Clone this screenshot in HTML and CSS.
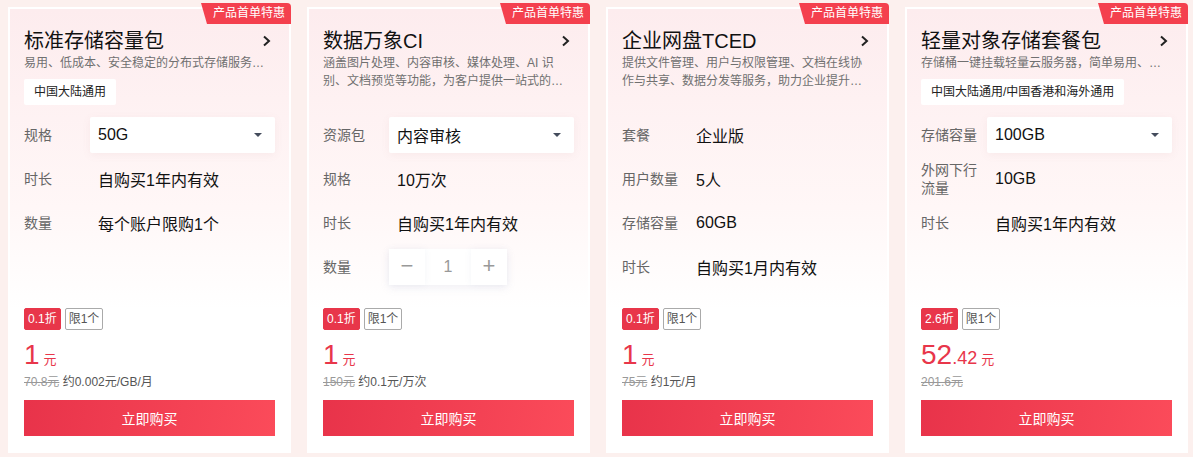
FILE: index.html
```html
<!DOCTYPE html>
<html>
<head>
    <meta charset="utf-8">
    <title>产品首单特惠</title>
    <link rel="stylesheet" href="styles.css">
</head>
<body>
    <div class="cards">
        <!-- 标准存储容量包 -->
        <div class="card">
            <span class="badge">产品首单特惠</span>
            <div class="card-head">
                <div class="title-row">
                    <span class="title">标准存储容量包</span>
                    <svg class="chevron" width="10" height="12" viewBox="0 0 10 12"><path d="M2 1.5L7 6L2 10.5" fill="none" stroke="#222" stroke-width="2"/></svg>
                </div>
                <p class="desc one-line">易用、低成本、安全稳定的分布式存储服务，适用于海量非结构化数据存储</p>
                <span class="region">中国大陆通用</span>
            </div>
            <div class="spec">
                <span class="label">规格</span>
                <div class="select">50G<i class="caret"></i></div>
                <span class="label">时长</span>
                <span class="value">自购买1年内有效</span>
                <span class="label">数量</span>
                <span class="value">每个账户限购1个</span>
            </div>
            <div class="card-foot">
                <div class="marks"><span class="off">0.1折</span><span class="limit">限1个</span></div>
                <div class="price"><span class="num">1</span><span class="unit">元</span></div>
                <div class="orig"><s>70.8元</s> 约0.002元/GB/月</div>
                <button class="buy">立即购买</button>
            </div>
        </div>

        <!-- 数据万象CI -->
        <div class="card">
            <span class="badge">产品首单特惠</span>
            <div class="card-head">
                <div class="title-row">
                    <span class="title">数据万象CI</span>
                    <svg class="chevron" width="10" height="12" viewBox="0 0 10 12"><path d="M2 1.5L7 6L2 10.5" fill="none" stroke="#222" stroke-width="2"/></svg>
                </div>
                <p class="desc two-line">涵盖图片处理、内容审核、媒体处理、AI 识别、文档预览等功能，为客户提供一站式的多媒体数据处理服务</p>
            </div>
            <div class="spec">
                <span class="label">资源包</span>
                <div class="select">内容审核<i class="caret"></i></div>
                <span class="label">规格</span>
                <span class="value">10万次</span>
                <span class="label">时长</span>
                <span class="value">自购买1年内有效</span>
                <span class="label">数量</span>
                <div class="stepper">
                    <span class="step">&minus;</span>
                    <span class="count">1</span>
                    <span class="step">+</span>
                </div>
            </div>
            <div class="card-foot">
                <div class="marks"><span class="off">0.1折</span><span class="limit">限1个</span></div>
                <div class="price"><span class="num">1</span><span class="unit">元</span></div>
                <div class="orig"><s>150元</s> 约0.1元/万次</div>
                <button class="buy">立即购买</button>
            </div>
        </div>

        <!-- 企业网盘TCED -->
        <div class="card">
            <span class="badge">产品首单特惠</span>
            <div class="card-head">
                <div class="title-row">
                    <span class="title">企业网盘TCED</span>
                    <svg class="chevron" width="10" height="12" viewBox="0 0 10 12"><path d="M2 1.5L7 6L2 10.5" fill="none" stroke="#222" stroke-width="2"/></svg>
                </div>
                <p class="desc two-line">提供文件管理、用户与权限管理、文档在线协作与共享、数据分发等服务，助力企业提升办公效率</p>
            </div>
            <div class="spec">
                <span class="label">套餐</span>
                <span class="value">企业版</span>
                <span class="label">用户数量</span>
                <span class="value">5人</span>
                <span class="label">存储容量</span>
                <span class="value">60GB</span>
                <span class="label">时长</span>
                <span class="value">自购买1月内有效</span>
            </div>
            <div class="card-foot">
                <div class="marks"><span class="off">0.1折</span><span class="limit">限1个</span></div>
                <div class="price"><span class="num">1</span><span class="unit">元</span></div>
                <div class="orig"><s>75元</s> 约1元/月</div>
                <button class="buy">立即购买</button>
            </div>
        </div>

        <!-- 轻量对象存储套餐包 -->
        <div class="card">
            <span class="badge">产品首单特惠</span>
            <div class="card-head">
                <div class="title-row">
                    <span class="title">轻量对象存储套餐包</span>
                    <svg class="chevron" width="10" height="12" viewBox="0 0 10 12"><path d="M2 1.5L7 6L2 10.5" fill="none" stroke="#222" stroke-width="2"/></svg>
                </div>
                <p class="desc one-line">存储桶一键挂载轻量云服务器，简单易用、高性价比</p>
                <span class="region">中国大陆通用/中国香港和海外通用</span>
            </div>
            <div class="spec">
                <span class="label">存储容量</span>
                <div class="select">100GB<i class="caret"></i></div>
                <span class="label">外网下行流量</span>
                <span class="value">10GB</span>
                <span class="label">时长</span>
                <span class="value">自购买1年内有效</span>
            </div>
            <div class="card-foot">
                <div class="marks"><span class="off">2.6折</span><span class="limit">限1个</span></div>
                <div class="price"><span class="num">52</span><span class="dec">.42</span><span class="unit">元</span></div>
                <div class="orig"><s>201.6元</s></div>
                <button class="buy">立即购买</button>
            </div>
        </div>
    </div>
</body>
</html>
```

FILE: styles.css
```css
body {
    margin: 0;
    background-color: #fcf0ee;
    font-family: "Liberation Sans", "Noto Sans CJK SC", sans-serif;
}

.cards {
    display: grid;
    grid-template-columns: repeat(4, 283px);
    gap: 16px;
    padding: 7px 0 0 8px;
}

.card {
    position: relative;
    box-sizing: border-box;
    height: 446px;
    display: flex;
    flex-direction: column;
    padding: 19px 14px 15px;
    border: 2px solid #ffffff;
    background: linear-gradient(180deg, #fdecee 0%, #fff7f7 45%, #ffffff 68%);
}

.badge {
    position: absolute;
    top: -6px;
    right: -2px;
    width: 90px;
    height: 21px;
    box-sizing: border-box;
    padding-left: 12px;
    background-color: #f4404e;
    color: #ffffff;
    font-size: 12px;
    line-height: 21px;
    clip-path: polygon(0 0, 100% 0, 100% 100%, 6px 100%);
    border-radius: 0 4px 0 0;
}

.card-head {
    height: 79px;
}

.title-row {
    display: flex;
    justify-content: space-between;
    align-items: center;
}

.title {
    font-size: 20px;
    line-height: 26px;
    color: #111111;
}

.chevron {
    margin-right: 3px;
}

.desc {
    margin: 0;
    width: 242px;
    font-size: 12px;
    line-height: 18px;
    color: #707070;
    overflow: hidden;
    text-overflow: ellipsis;
}

.one-line {
    white-space: nowrap;
}

.two-line {
    display: -webkit-box;
    -webkit-line-clamp: 2;
    -webkit-box-orient: vertical;
}

.region {
    display: inline-block;
    margin-top: 7px;
    padding: 0 10px;
    height: 26px;
    line-height: 26px;
    background-color: #ffffff;
    border-radius: 2px;
    font-size: 12px;
    color: #222222;
}

.spec {
    display: grid;
    grid-template-columns: 66px 1fr;
    grid-auto-rows: 36px;
    row-gap: 8px;
    align-items: center;
    margin-top: 10px;
}

.label {
    font-size: 14px;
    line-height: 18px;
    color: #666666;
}

.value {
    padding-left: 8px;
    font-size: 16px;
    color: #111111;
}

.select {
    display: flex;
    align-items: center;
    justify-content: space-between;
    height: 36px;
    padding: 0 13px 0 8px;
    background-color: #ffffff;
    border-radius: 2px;
    box-shadow: 0 2px 8px rgba(180, 120, 120, 0.08);
    font-size: 16px;
    color: #111111;
}

.caret {
    width: 0;
    height: 0;
    border-left: 4px solid transparent;
    border-right: 4px solid transparent;
    border-top: 4px solid #444c5c;
}

.stepper {
    display: flex;
    width: 118px;
    height: 36px;
    background-color: #ffffff;
    box-shadow: 0 3px 8px rgba(160, 170, 200, 0.15);
}

.step {
    width: 36px;
    height: 36px;
    line-height: 34px;
    text-align: center;
    font-size: 22px;
    color: #999999;
    box-shadow: 0 0 6px rgba(160, 170, 200, 0.12);
}

.count {
    flex: 1;
    text-align: center;
    line-height: 36px;
    font-size: 16px;
    color: #999999;
}

.card-foot {
    margin-top: auto;
}

.marks {
    display: flex;
    gap: 4px;
}

.off,
.limit {
    box-sizing: border-box;
    height: 22px;
    line-height: 20px;
    padding: 0 3px;
    font-size: 12px;
    white-space: nowrap;
    border-radius: 2px;
}

.off {
    background-color: #e8364a;
    border: 1px solid #e8364a;
    color: #ffffff;
}

.limit {
    border: 1px solid #aaaaaa;
    color: #555555;
}

.price {
    margin-top: 10px;
    height: 30px;
    line-height: 30px;
    color: #e8364a;
}

.num {
    font-size: 28px;
}

.dec {
    font-size: 18px;
}

.unit {
    margin-left: 4px;
    font-size: 13px;
}

.orig {
    margin-top: 3px;
    line-height: 18px;
    font-size: 12px;
    color: #555555;
}

.orig s {
    color: #999999;
}

.buy {
    display: block;
    width: 100%;
    height: 36px;
    margin-top: 9px;
    border: none;
    background: linear-gradient(100deg, #e8334a 0%, #fb4b5a 100%);
    color: #ffffff;
    font-family: inherit;
    font-size: 14px;
    cursor: pointer;
}
```
